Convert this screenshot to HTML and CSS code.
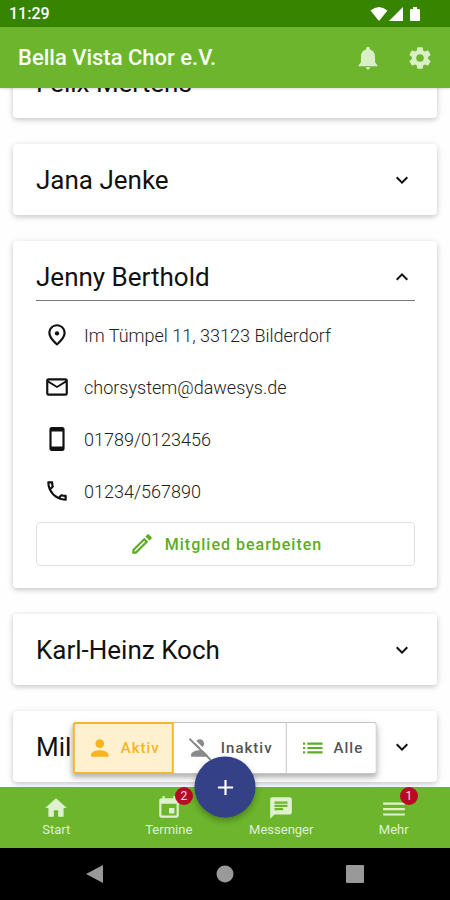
FILE: index.html
```html
<!DOCTYPE html>
<html lang="de">
<head>
<meta charset="utf-8">
<meta name="viewport" content="width=device-width, initial-scale=1">
<title>Bella Vista Chor e.V.</title>
<link rel="stylesheet" href="styles.css">
</head>
<body>
<svg class="defs" aria-hidden="true">
  <symbol id="down" viewBox="0 0 24 24"><path d="M7.410 8.580 12 13.170l4.590-4.590L18 10l-6 6-6-6z"/></symbol>
  <symbol id="up" viewBox="0 0 24 24"><path d="M7.410 15.410 12 10.830l4.590 4.580L18 14l-6-6-6 6z"/></symbol>
</svg>

<div class="status">
  <span>11:29</span>
  <svg class="status-icons" viewBox="0 0 52 16" aria-hidden="true">
    <path d="M0.500 4.500Q9 -2.500 17.500 4.500L9 15z"/>
    <path d="M33 1v14H19z"/>
    <path d="M43 1h4v2h2a1 1 0 0 1 1 1v10a1 1 0 0 1-1 1h-8a1 1 0 0 1-1-1V4a1 1 0 0 1 1-1h2z"/>
  </svg>
</div>

<header class="topbar">
  <h1>Bella Vista Chor e.V.</h1>
  <button class="icon-btn" aria-label="Benachrichtigungen"><svg class="icon" viewBox="0 0 24 24"><path d="M12 22.500c1.100 0 2-.9 2-2h-4c0 1.100.9 2 2 2zm6.500-6.500v-5.500c0-3.070-1.900-5.640-4.800-6.320V3.200a1.700 1.700 0 0 0-3.400 0v.98c-2.900.68-4.800 3.240-4.800 6.320V16l-2 2.500v1h17v-1z"/></svg></button>
  <button class="icon-btn" aria-label="Einstellungen"><svg class="icon" viewBox="0 0 24 24"><path d="M12 15.500A3.500 3.500 0 0 1 8.500 12 3.500 3.500 0 0 1 12 8.500a3.500 3.500 0 0 1 3.500 3.500 3.500 3.500 0 0 1-3.500 3.500m7.430-2.530c.04-.32.07-.64.07-.97s-.03-.66-.07-1l2.110-1.630c.19-.15.24-.42.12-.64l-2-3.460c-.12-.22-.39-.31-.61-.22l-2.490 1c-.52-.39-1.060-.73-1.690-.98l-.37-2.650A.506.506 0 0 0 14 2h-4c-.25 0-.46.18-.5.42l-.37 2.650c-.63.25-1.170.59-1.690.98l-2.490-1c-.22-.09-.49 0-.61.22l-2 3.460c-.13.22-.07.49.12.64L4.570 11c-.04.34-.07.67-.07 1s.03.65.07.97l-2.110 1.660c-.19.15-.25.42-.12.64l2 3.460c.12.22.39.3.61.22l2.490-1.010c.52.4 1.060.74 1.690.99l.37 2.650c.04.24.25.42.5.42h4c.25 0 .46-.18.5-.42l.37-2.650c.63-.26 1.170-.59 1.690-.99l2.490 1.010c.22.08.49 0 .61-.22l2-3.460c.12-.22.07-.49-.12-.64z"/></svg></button>
</header>

<main class="content">
  <div class="members">
    <section class="card"><div class="card-head"><h2>Felix Mertens</h2><button class="toggle" aria-label="Öffnen"><svg class="icon"><use href="#down"/></svg></button></div></section>
    <section class="card"><div class="card-head"><h2>Jana Jenke</h2><button class="toggle" aria-label="Öffnen"><svg class="icon"><use href="#down"/></svg></button></div></section>
    <section class="card card-open">
      <div class="card-head"><h2>Jenny Berthold</h2><button class="toggle" aria-label="Schließen"><svg class="icon"><use href="#up"/></svg></button></div>
      <ul class="details">
        <li><svg class="icon" viewBox="0 0 24 24"><path fill-rule="evenodd" d="M12 2c-4.200 0-8 3.220-8 8.200 0 3.320 2.670 7.250 8 11.800 5.330-4.550 8-8.480 8-11.800C20 5.220 16.200 2 12 2zm6 8.200C18 6.570 15.350 4 12 4s-6 2.570-6 6.200c0 2.340 1.950 5.440 6 9.140 4.050-3.700 6-6.800 6-9.140z"/><circle cx="12" cy="10.500" r="2"/></svg>Im Tümpel 11, 33123 Bilderdorf</li>
        <li><svg class="icon" viewBox="0 0 24 24"><path d="M22 6c0-1.100-.9-2-2-2H4c-1.100 0-2 .9-2 2v12c0 1.100.9 2 2 2h16c1.100 0 2-.9 2-2V6zm-2 0-8 4.990L4 6h16zm0 12H4V8l8 5 8-5v10z"/></svg>chorsystem@dawesys.de</li>
        <li><svg class="icon" viewBox="0 0 24 24"><path d="M17 1.010 7 1c-1.100 0-2 .9-2 2v18c0 1.100.9 2 2 2h10c1.100 0 2-.9 2-2V3c0-1.100-.9-1.990-2-1.990zM17 19H7V5h10v14z"/></svg>01789/0123456</li>
        <li><svg class="icon" viewBox="0 0 24 24"><path d="M6.540 5c.06.89.21 1.760.45 2.590l-1.200 1.200c-.41-1.200-.67-2.470-.76-3.790h1.510m9.860 12.020c.85.24 1.720.39 2.600.45v1.490c-1.320-.09-2.590-.35-3.800-.75l1.200-1.190M7.500 3H4c-.55 0-1 .45-1 1 0 9.390 7.610 17 17 17 .55 0 1-.45 1-1v-3.490c0-.55-.45-1-1-1-1.240 0-2.450-.2-3.570-.57a1.020 1.020 0 0 0-1.020.24l-2.200 2.200a15.045 15.045 0 0 1-6.590-6.590l2.200-2.200c.28-.28.36-.67.25-1.020A11.360 11.360 0 0 1 8.500 4c0-.55-.45-1-1-1z"/></svg>01234/567890</li>
      </ul>
      <button class="edit"><svg class="icon" viewBox="0 0 24 24"><path d="m14.060 9.020.92.92L5.920 19H5v-.92l9.060-9.060M17.660 3c-.25 0-.51.1-.7.29l-1.830 1.830 3.750 3.750 1.830-1.830c.39-.39.39-1.020 0-1.410l-2.340-2.340c-.2-.2-.45-.29-.71-.29zm-3.600 3.190L3 17.250V21h3.750L17.810 9.940l-3.750-3.750z"/></svg>Mitglied bearbeiten</button>
    </section>
    <section class="card"><div class="card-head"><h2>Karl-Heinz Koch</h2><button class="toggle" aria-label="Öffnen"><svg class="icon"><use href="#down"/></svg></button></div></section>
    <section class="card"><div class="card-head"><h2>Mil</h2><button class="toggle" aria-label="Öffnen"><svg class="icon"><use href="#down"/></svg></button></div></section>
  </div>
  <div class="filter" role="group" aria-label="Filter">
    <button class="active" aria-pressed="true"><svg class="icon" viewBox="0 0 24 24"><path d="M12 12c2.210 0 4-1.790 4-4s-1.790-4-4-4-4 1.790-4 4 1.790 4 4 4zm0 2c-2.670 0-8 1.340-8 4v2h16v-2c0-2.660-5.330-4-8-4z"/></svg>Aktiv</button>
    <button aria-pressed="false"><svg class="icon gray" viewBox="0 0 24 24"><path d="M12 12c2.210 0 4-1.790 4-4s-1.790-4-4-4-4 1.790-4 4 1.790 4 4 4zm0 2c-2.670 0-8 1.340-8 4v2h16v-2c0-2.660-5.330-4-8-4z"/><path d="M4.500 2.500 23 21" fill="none" stroke="#fff" stroke-width="2"/><path d="M2.500 3.500 22 23" fill="none" stroke="currentColor" stroke-width="1.800"/></svg>Inaktiv</button>
    <button aria-pressed="false"><svg class="icon green" viewBox="0 0 24 24"><path d="M3 7h2v2H3zM3 11h2v2H3zM3 15h2v2H3zM7 7h14v2H7zM7 11h14v2H7zM7 15h14v2H7z"/></svg>Alle</button>
  </div>
</main>

<nav class="tabs">
  <a href="#start"><span class="tab-icon"><svg class="icon" viewBox="0 0 24 24"><path d="M10 20v-6h4v6h5v-8h3L12 3 2 12h3v8z"/></svg></span>Start</a>
  <a href="#termine"><span class="tab-icon"><svg class="icon" viewBox="0 0 24 24"><path d="M17 12h-5v5h5v-5zM16 1v2H8V1H6v2H5c-1.110 0-1.990.9-1.990 2L3 19c0 1.100.89 2 2 2h14c1.100 0 2-.9 2-2V5c0-1.100-.9-2-2-2h-1V1h-2zm3 18H5V8h14v11z"/></svg><b class="badge">2</b></span>Termine</a>
  <a href="#messenger"><span class="tab-icon"><svg class="icon" viewBox="0 0 24 24"><path d="M20 2H4a2 2 0 0 0-2 2v18l4-4h14a2 2 0 0 0 2-2V4a2 2 0 0 0-2-2M6 9h12v2H6m8 3H6v-2h8m4-4H6V6h12"/></svg></span>Messenger</a>
  <a href="#mehr"><span class="tab-icon"><svg class="icon" viewBox="0 0 24 24"><path d="M2 19h20v-2H2v2zm0-5h20v-2H2v2zm0-7v2h20V7H2z"/></svg><b class="badge">1</b></span>Mehr</a>
  <button class="fab" aria-label="Hinzufügen"><svg class="icon" viewBox="0 0 24 24"><path d="M19 13h-6v6h-2v-6H5v-2h6V5h2v6h6z"/></svg></button>
</nav>

<div class="system">
  <button aria-label="Zurück"><svg viewBox="0 0 18 18"><path d="M17 0v18L0 9z"/></svg></button>
  <button aria-label="Startbildschirm"><svg viewBox="0 0 18 18"><circle cx="9" cy="9" r="8.500"/></svg></button>
  <button aria-label="Übersicht"><svg viewBox="0 0 18 18"><rect width="18" height="18" rx="1"/></svg></button>
</div>
</body>
</html>
```
FILE: styles.css
```css
* { box-sizing: border-box; }

body {
  display: flex;
  flex-direction: column;
  height: 100vh;
  margin: 0;
  background: #fefefe;
  color: #111;
  font-family: Roboto, "Liberation Sans", sans-serif;
}

h1, h2, ul { margin: 0; padding: 0; }

button {
  padding: 0;
  border: 0;
  background: none;
  color: inherit;
  font: inherit;
}

svg { display: block; fill: currentColor; }

.defs { position: absolute; width: 0; height: 0; }

.icon { flex: none; width: 26px; height: 26px; }
.icon-btn { flex: none; }
.toggle { flex: none; padding: 0 1px; }
.toggle .icon { width: 24px; height: 24px; }

.status {
  flex: none;
  display: flex;
  align-items: center;
  justify-content: space-between;
  height: 27px;
  padding: 0 28px 0 9px;
  background: #378400;
  color: #fff;
  font-size: 16px;
  font-weight: 500;
}

.status-icons { width: 52px; height: 16px; }

.topbar {
  flex: none;
  display: flex;
  align-items: center;
  gap: 26px;
  height: 61px;
  padding: 0 17px 0 18px;
  background: #6cb52c;
  color: #d9efc6;
  z-index: 1;
  box-shadow: 0 1px 2px rgba(0, 0, 0, .15);
}

.topbar h1 {
  flex: 1;
  color: #fafff5;
  font-size: 22px;
  font-weight: 500;
}

.content {
  position: relative;
  flex: 1;
  min-height: 0;
}

.members {
  display: flex;
  flex-direction: column;
  justify-content: flex-end;
  gap: 26px;
  height: 100%;
  padding: 0 13px 5px;
  overflow: hidden;
}

.card {
  flex: none;
  padding: 12px 22px 11px 23px;
  border-radius: 4px;
  background: #fff;
  box-shadow: 0 2px 5px rgba(0, 0, 0, .16), 0 1px 8px rgba(0, 0, 0, .08);
}

.card-open { padding-bottom: 22px; }

.card-head {
  display: flex;
  align-items: center;
  justify-content: space-between;
  height: 48px;
}

.card-head h2 {
  font-size: 26px;
  font-weight: 400;
}

.card-open .card-head { border-bottom: 1px solid #777; }

.details {
  padding: 8px 8px 5px;
  list-style: none;
  color: #222;
  font-size: 18px;
  font-weight: 300;
}

.details li {
  display: flex;
  align-items: center;
  gap: 14px;
  height: 52px;
}

.details .icon { color: #111; }

.edit {
  display: flex;
  align-items: center;
  justify-content: center;
  gap: 10px;
  width: 100%;
  height: 44px;
  border: 1px solid #e2e2e2;
  border-radius: 4px;
  color: #5bad24;
  font-size: 16px;
  font-weight: 500;
  letter-spacing: 1px;
}

.filter {
  position: absolute;
  bottom: 13px;
  left: 50%;
  display: flex;
  border-radius: 3px;
  background: #fff;
  color: #555;
  font-size: 15px;
  font-weight: 500;
  letter-spacing: 1px;
  box-shadow: 0 3px 4px rgba(0, 0, 0, .2), 0 4px 10px rgba(0, 0, 0, .15);
  transform: translateX(-50%);
}

.filter button {
  display: flex;
  align-items: center;
  gap: 8px;
  height: 52px;
  padding: 0 13px;
  border: 1px solid #c4c4c4;
  border-left-width: 0;
  letter-spacing: inherit;
}

.filter button:last-child { border-radius: 0 3px 3px 0; }

.filter .active {
  padding: 0 12px;
  border: 2px solid #f3b62c;
  border-radius: 3px 0 0 3px;
  background: #fff1cf;
  color: #f7b51d;
}

.gray { color: #8a8a8a; }
.green { color: #5bad24; }

.tabs {
  position: relative;
  flex: none;
  display: grid;
  grid-template-columns: repeat(4, 1fr);
  height: 61px;
  background: #6cb52c;
}

.tabs a {
  display: flex;
  flex-direction: column;
  align-items: center;
  padding-top: 8px;
  color: #dff2cf;
  font-size: 13px;
  line-height: 18px;
  text-decoration: none;
}

.tab-icon { position: relative; }

.badge {
  position: absolute;
  top: -8px;
  left: 19px;
  width: 18px;
  border-radius: 9px;
  background: #b80a24;
  color: #f4dfe2;
  font-size: 12px;
  font-weight: 400;
  line-height: 18px;
  text-align: center;
}

.fab {
  position: absolute;
  top: 0;
  left: 50%;
  display: grid;
  place-items: center;
  width: 61px;
  height: 61px;
  border-radius: 50%;
  background: #344187;
  color: #fff;
  box-shadow: 0 3px 6px rgba(0, 0, 0, .3);
  transform: translate(-50%, -50%);
}

.system {
  flex: none;
  display: grid;
  grid-template-columns: repeat(3, 1fr);
  place-items: center;
  height: 52px;
  padding: 0 30px;
  background: #000;
  color: #999;
}

.system svg { width: 18px; height: 18px; }
```
